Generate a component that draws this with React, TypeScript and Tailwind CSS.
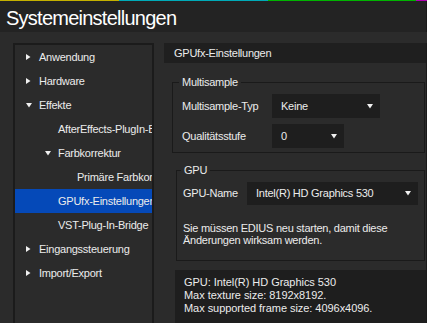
import React from "react";

function ArrowRight() {
  return (
    <svg width="5" height="6" viewBox="0 0 5 6" className="block">
      <polygon points="0,0 4.5,3 0,6" fill="#f0f0f0" />
    </svg>
  );
}

function ArrowDown() {
  return (
    <svg width="6" height="5" viewBox="0 0 6 5" className="block">
      <polygon points="0,0 6,0 3,4.5" fill="#f0f0f0" />
    </svg>
  );
}

type Row = { label: string; level: number; arrow?: "right" | "down"; selected?: boolean };

const rows: Row[] = [
  { label: "Anwendung", level: 0, arrow: "right" },
  { label: "Hardware", level: 0, arrow: "right" },
  { label: "Effekte", level: 0, arrow: "down" },
  { label: "AfterEffects-PlugIn-Bridge", level: 1 },
  { label: "Farbkorrektur", level: 1, arrow: "down" },
  { label: "Primäre Farbkorrektur", level: 2 },
  { label: "GPUfx-Einstellungen", level: 1, selected: true },
  { label: "VST-Plug-In-Bridge", level: 1 },
  { label: "Eingangssteuerung", level: 0, arrow: "right" },
  { label: "Import/Export", level: 0, arrow: "right" },
];

const pads = ["pl-[11px]", "pl-[30px]", "pl-[49px]"];

function Dropdown({ value, width, height }: { value: string; width: string; height: string }) {
  return (
    <div className={`${width} ${height} bg-[#1e1e1e] flex items-center justify-between pl-[9px] pr-[7px]`}>
      <span>{value}</span>
      <ArrowDown />
    </div>
  );
}

export default function App() {
  return (
    <div className="w-[427px] h-[323px] overflow-hidden bg-[#2b2b2b] flex flex-col font-['Liberation_Sans',Arial,sans-serif] text-[11px] tracking-[-0.25px] text-[#ececec]">
      <div className="flex h-px shrink-0">
        <div className="w-[119px] bg-[#c4b000]" />
        <div className="w-[149px] bg-[#00aab8]" />
        <div className="w-[148px] bg-[#00b400]" />
        <div className="flex-1 bg-[#b400b4]" />
      </div>
      <div className="h-[31px] shrink-0 bg-[#232323] pl-[6px] pt-[2px] flex items-center text-[20px] tracking-[-0.75px] text-white border-r border-[#1a1a1a]">
        Systemeinstellungen
      </div>
      <div className="flex flex-1 min-h-0">
        <div className="ml-[13px] mt-[11px] w-[141px] shrink-0 border-2 border-b-0 border-[#1b1b1b] flex flex-col">
          {rows.map((r) => (
            <div
              key={r.label}
              className={`h-[24px] shrink-0 flex items-center overflow-hidden whitespace-nowrap ${pads[r.level]} ${r.selected ? "bg-[#0549b8]" : ""}`}
            >
              <div className="w-[13px] shrink-0 flex items-center">
                {r.arrow === "right" && <ArrowRight />}
                {r.arrow === "down" && <ArrowDown />}
              </div>
              <span>{r.label}</span>
            </div>
          ))}
        </div>
        <div className="flex-1 ml-[10px] mt-[11px] flex flex-col border-r border-[#1a1a1a]">
          <div className="h-[20px] shrink-0 bg-[#1f1f1f] pl-[10px] flex items-center">GPUfx-Einstellungen</div>

          <div className="relative mt-[19px] ml-[8px] w-[253px] h-[71px] shrink-0 border border-[#1a1a1a] pt-[11px] pl-[9px]">
            <div className="absolute -top-[7px] left-[6px] px-[3px] bg-[#2b2b2b] leading-[13px]">Multisample</div>
            <div className="flex items-center h-[24px]">
              <div className="w-[90px]">Multisample-Typ</div>
              <Dropdown value="Keine" width="w-[108px]" height="h-[24px]" />
            </div>
            <div className="flex items-center h-[24px] mt-[6px]">
              <div className="w-[90px]">Qualitätsstufe</div>
              <Dropdown value="0" width="w-[72px]" height="h-[24px]" />
            </div>
          </div>

          <div className="relative mt-[17px] ml-[12px] w-[249px] h-[91px] shrink-0 border border-[#1a1a1a] pt-[11px] pl-[6px]">
            <div className="absolute -top-[7px] left-[4px] px-[3px] bg-[#2b2b2b] leading-[13px]">GPU</div>
            <div className="flex items-center h-[23px]">
              <div className="w-[64px]">GPU-Name</div>
              <Dropdown value="Intel(R) HD Graphics 530" width="w-[171px]" height="h-[23px]" />
            </div>
            <div className="mt-[18px] leading-[11.5px]">
              <div>Sie müssen EDIUS neu starten, damit diese</div>
              <div>Änderungen wirksam werden.</div>
            </div>
          </div>

          <div className="mt-[9px] ml-[11px] flex-1 bg-[#1e1e1e] pt-[6px] pl-[9px] leading-[13px] tracking-[-0.05px]">
            <div>GPU: Intel(R) HD Graphics 530</div>
            <div>Max texture size: 8192x8192.</div>
            <div>Max supported frame size: 4096x4096.</div>
          </div>
        </div>
      </div>
    </div>
  );
}
